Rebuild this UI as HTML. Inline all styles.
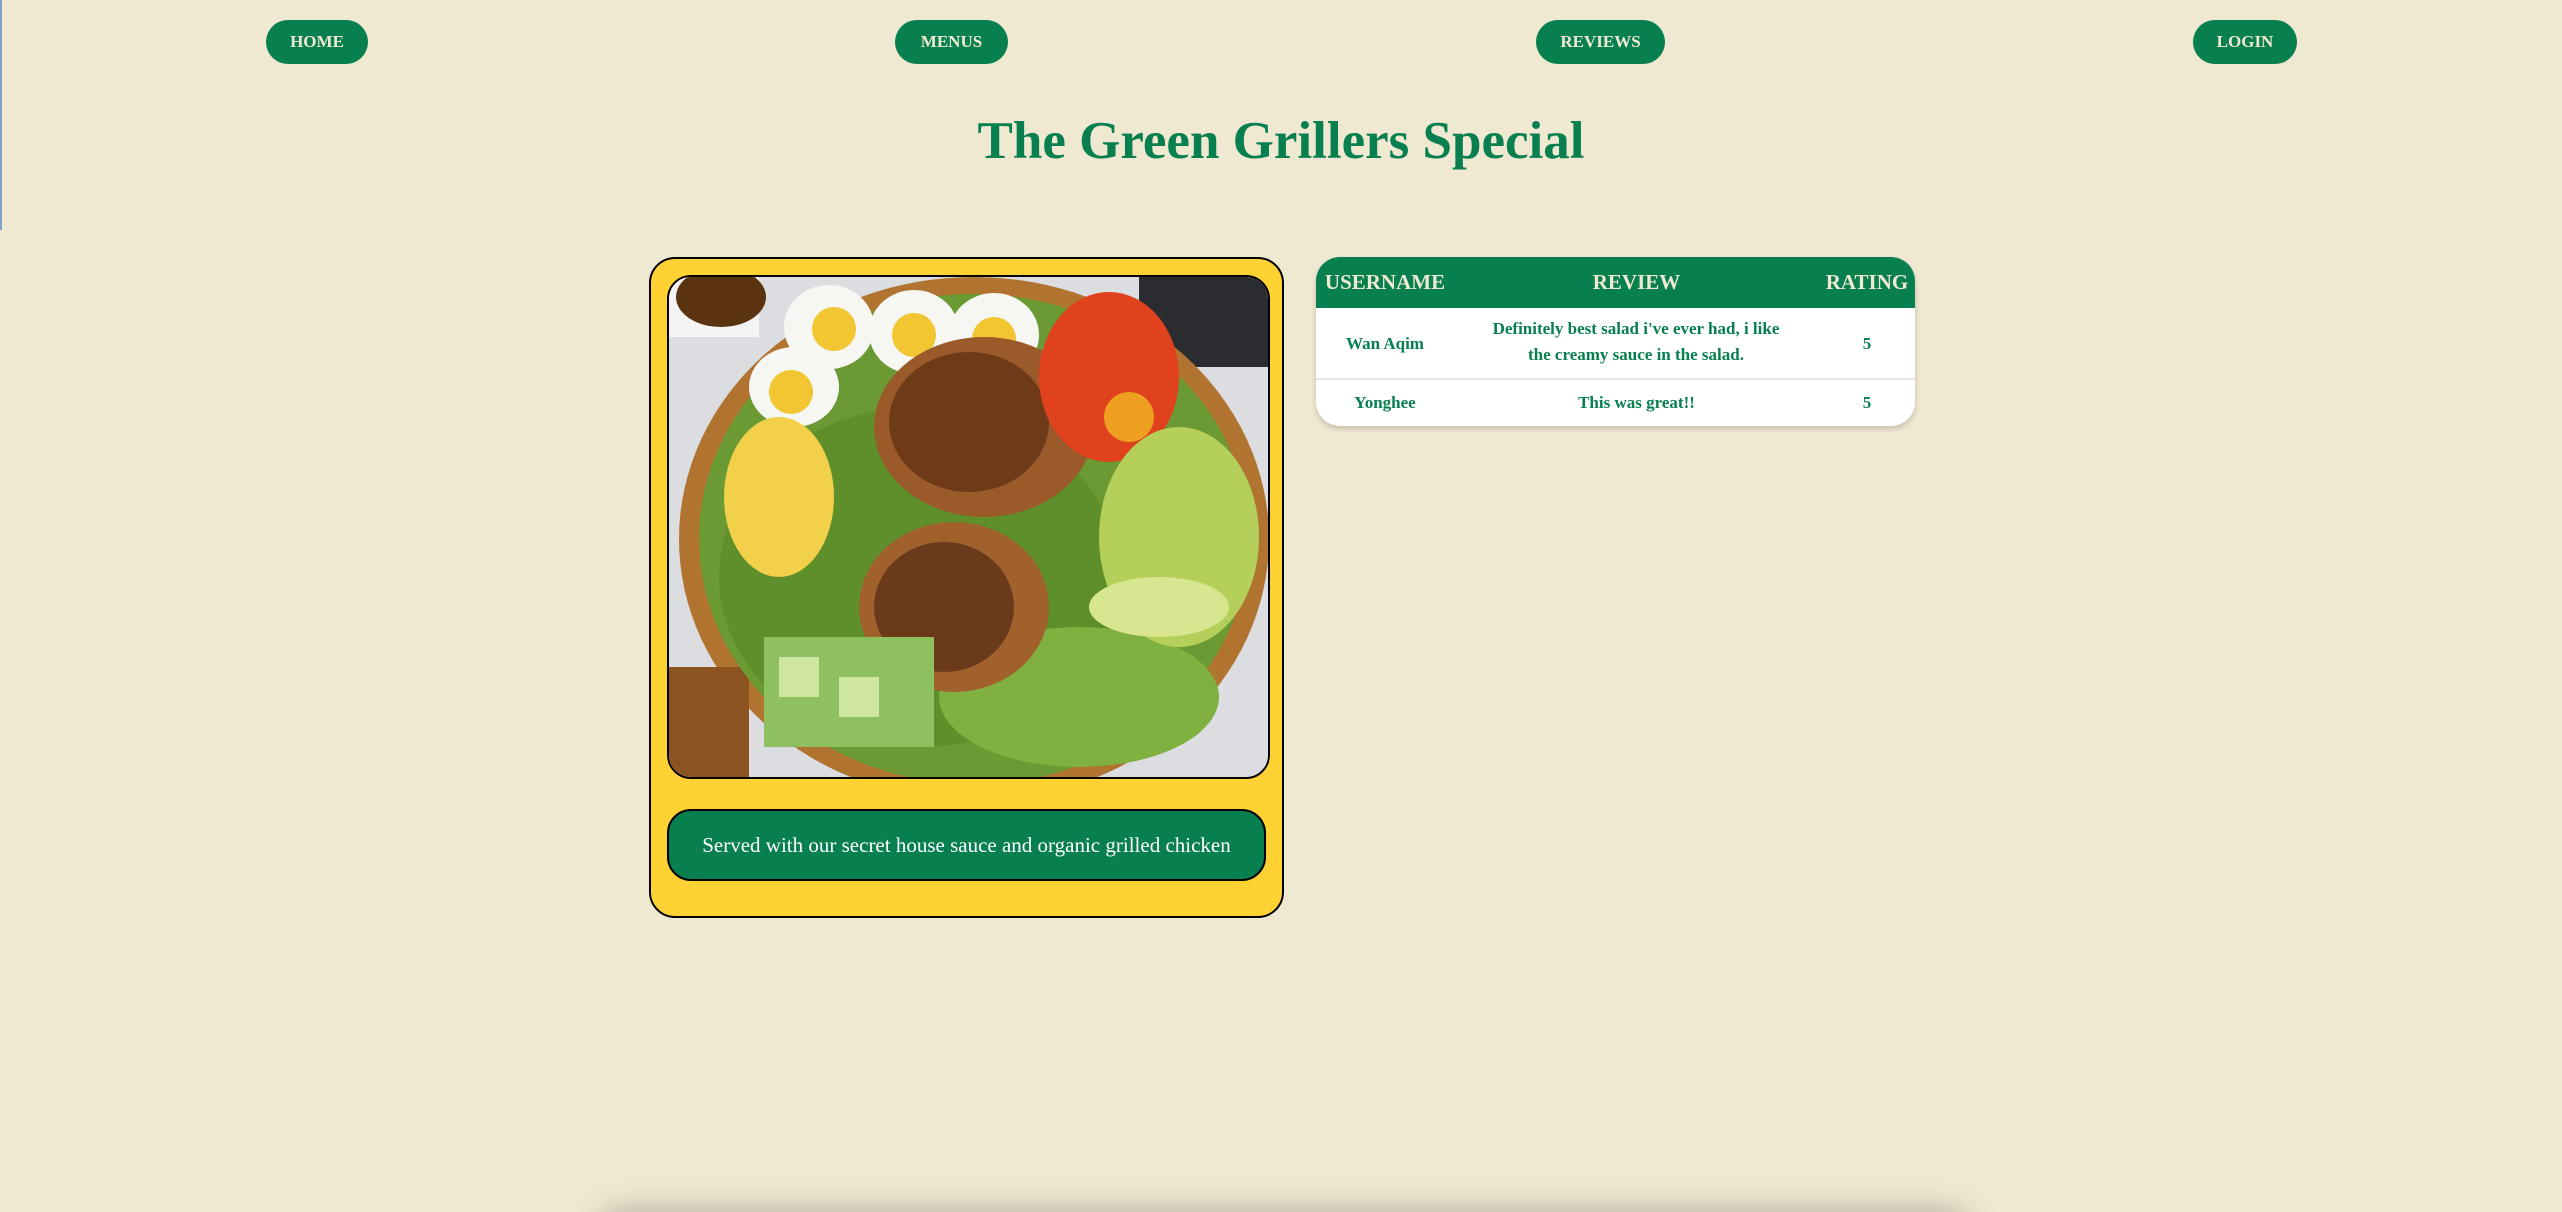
<!DOCTYPE html>
<html><head><meta charset="utf-8"><style>
html,body{margin:0;padding:0;width:2562px;height:1212px;overflow:hidden;}
body{background:#F0E9D2;position:relative;font-family:"Liberation Serif",serif;}
.nav{position:absolute;top:20px;height:44px;background:#077F4F;color:#F0E9D2;border-radius:22px;font-weight:bold;font-size:17px;display:flex;align-items:center;justify-content:center;}
h1{position:absolute;top:106px;left:0;width:2562px;text-align:center;margin:0;color:#077F4F;font-size:53px;font-weight:bold;line-height:70px;}
.card{position:absolute;left:649px;top:257px;width:631px;height:657px;background:#FFD233;border:2px solid #000;border-radius:26px;}
.img{position:absolute;left:16px;top:16px;width:599px;height:500px;border:2px solid #000;border-radius:24px;overflow:hidden;background:#e8e8ea;}
.cap{position:absolute;left:16px;top:550px;width:595px;height:68px;background:#077F4F;border:2px solid #000;border-radius:24px;color:#fff;font-size:21px;display:flex;align-items:center;justify-content:center;}
.tbl{position:absolute;left:1316px;top:257px;width:599px;height:169px;background:#fff;border-radius:24px;overflow:hidden;box-shadow:0 3px 6px rgba(0,0,0,0.18);}
.hd{position:absolute;top:0;left:0;width:599px;height:51px;background:#077F4F;color:#F0E9D2;font-weight:bold;font-size:21px;}
.c{position:absolute;text-align:center;color:#077F4F;font-weight:bold;font-size:17px;line-height:26px;}
.hd .c{color:#F0E9D2;font-size:21px;}
</style></head><body>
<div style="position:absolute;left:0;top:0;width:2px;height:230px;background:#7fa3c8"></div>
<div class="nav" style="left:266px;width:102px">HOME</div>
<div class="nav" style="left:895px;width:113px">MENUS</div>
<div class="nav" style="left:1536px;width:129px">REVIEWS</div>
<div class="nav" style="left:2193px;width:104px">LOGIN</div>
<h1>The Green Grillers Special</h1>

<div class="card">
 <div class="img">
  <svg width="599" height="500" viewBox="0 0 599 500">
   <rect width="599" height="500" fill="#dcdde0"/>
   <rect x="470" y="0" width="129" height="90" fill="#2a2c30"/>
   <rect x="0" y="0" width="90" height="60" fill="#f4f4f4"/>
   <ellipse cx="52" cy="20" rx="45" ry="30" fill="#5a3310"/>
   <ellipse cx="305" cy="262" rx="295" ry="262" fill="#b07330"/>
   <rect x="0" y="390" width="80" height="110" fill="#8a5320"/>
   <ellipse cx="305" cy="262" rx="275" ry="245" fill="#6b9a34"/>
   <ellipse cx="250" cy="300" rx="200" ry="170" fill="#5e8f2a"/>
   <ellipse cx="410" cy="420" rx="140" ry="70" fill="#7fb040"/>
   <ellipse cx="160" cy="50" rx="45" ry="42" fill="#f6f6f2"/><circle cx="165" cy="52" r="22" fill="#f2c633"/>
   <ellipse cx="245" cy="55" rx="45" ry="42" fill="#f6f6f2"/><circle cx="245" cy="58" r="22" fill="#f2c633"/>
   <ellipse cx="325" cy="58" rx="45" ry="42" fill="#f6f6f2"/><circle cx="325" cy="62" r="22" fill="#f2c633"/>
   <ellipse cx="125" cy="110" rx="45" ry="40" fill="#f6f6f2"/><circle cx="122" cy="115" r="22" fill="#f2c633"/>
   <ellipse cx="110" cy="220" rx="55" ry="80" fill="#f2d04a"/>
   <ellipse cx="315" cy="150" rx="110" ry="90" fill="#9a5a2a"/>
   <ellipse cx="300" cy="145" rx="80" ry="70" fill="#6e3a18"/>
   <ellipse cx="285" cy="330" rx="95" ry="85" fill="#a0612d"/>
   <ellipse cx="275" cy="330" rx="70" ry="65" fill="#6b3a1a"/>
   <ellipse cx="440" cy="100" rx="70" ry="85" fill="#e0421e"/>
   <circle cx="460" cy="140" r="25" fill="#f0a020"/>
   <ellipse cx="510" cy="260" rx="80" ry="110" fill="#b4d05a"/>
   <ellipse cx="490" cy="330" rx="70" ry="30" fill="#d8e690"/>
   <rect x="95" y="360" width="170" height="110" fill="#8fc060"/>
   <rect x="110" y="380" width="40" height="40" fill="#cfe6a0"/>
   <rect x="170" y="400" width="40" height="40" fill="#cfe6a0"/>
  </svg>
 </div>
 <div class="cap">Served with our secret house sauce and organic grilled chicken</div>
</div>

<div class="tbl">
 <div class="hd">
  <div class="c" style="left:0;width:138px;top:12px">USERNAME</div>
  <div class="c" style="left:138px;width:365px;top:12px">REVIEW</div>
  <div class="c" style="left:503px;width:96px;top:12px">RATING</div>
 </div>
 <div class="c" style="left:0;width:138px;top:74px">Wan Aqim</div>
 <div class="c" style="left:165px;width:310px;top:59px">Definitely best salad i've ever had, i like the creamy sauce in the salad.</div>
 <div class="c" style="left:503px;width:96px;top:74px">5</div>
 <div style="position:absolute;left:0;top:121px;width:599px;height:2px;background:#e4e4e4"></div>
 <div class="c" style="left:0;width:138px;top:133px">Yonghee</div>
 <div class="c" style="left:138px;width:365px;top:133px">This was great!!</div>
 <div class="c" style="left:503px;width:96px;top:133px">5</div>
</div>

<div style="position:absolute;left:600px;top:1216px;width:1370px;height:40px;box-shadow:0 -6px 30px rgba(0,0,0,0.25);border-radius:20px"></div>
</body></html>
